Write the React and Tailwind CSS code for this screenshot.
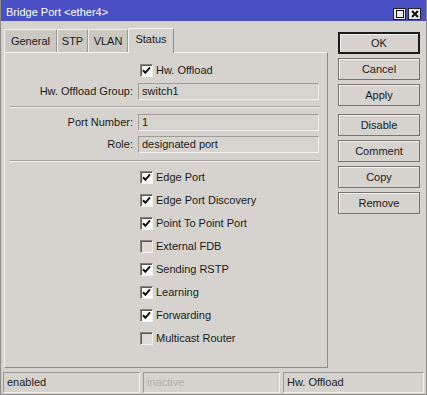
import React from 'react';

function Check({ checked }) {
  return (
    <span
      className={`w-[13px] h-[13px] shrink-0 border border-[#85827d] border-b-[#f4f2ef] border-r-[#f4f2ef] shadow-[inset_1px_1px_0_#5e5c58] flex items-center justify-center ${
        checked ? 'bg-white' : 'bg-[#dedbd6]'
      }`}
    >
      {checked && (
        <svg width="9" height="9" viewBox="0 0 9 9">
          <path d="M1 4.2 L3.4 6.8 L8 1.4" stroke="#111" strokeWidth="2" fill="none" />
        </svg>
      )}
    </span>
  );
}

function CheckRow({ label, checked }) {
  return (
    <div className="h-[13px] flex items-center pl-[135px]">
      <Check checked={checked} />
      <span className="ml-[3px] leading-none">{label}</span>
    </div>
  );
}

function Field({ label, value }) {
  return (
    <div className="flex items-center h-[17px]">
      <span className="w-[129px] text-right pr-[1px]">{label}</span>
      <div className="ml-[4px] w-[181px] h-[17px] border border-[#9f9c97] border-b-[#f2f0ec] border-r-[#f2f0ec] bg-[#d7d4cf] pl-[3px] flex items-center">
        {value}
      </div>
    </div>
  );
}

function Separator() {
  return (
    <div className="ml-[5px] w-[310px] border-t border-[#a3a09b] border-b border-b-[#f4f2ee]"></div>
  );
}

function Button({ label, primary }) {
  return (
    <div
      className={`h-[22px] flex items-center justify-center bg-[#d6d3ce] shadow-[inset_1px_1px_0_#f5f3f0] ${
        primary ? 'border-2 border-[#1b1b1b]' : 'border border-[#77746f]'
      }`}
    >
      {label}
    </div>
  );
}

const checks = [
  ['Edge Port', true],
  ['Edge Port Discovery', true],
  ['Point To Point Port', true],
  ['External FDB', false],
  ['Sending RSTP', true],
  ['Learning', true],
  ['Forwarding', true],
  ['Multicast Router', false],
];

const tabs = [
  ['General', 'w-[53px]'],
  ['STP', 'w-[31px]'],
  ['VLAN', 'w-[40px]'],
];

export default function App() {
  return (
    <div className="w-[427px] h-[395px] flex flex-col bg-[#d6d3ce] text-[11px] text-[#1a1a1a] font-['Liberation_Sans',Arial,sans-serif] border-l border-r border-b border-[#8e8b86] overflow-hidden">
      {/* title bar */}
      <div className="h-[21px] shrink-0 bg-[#4b4fc4] flex items-end justify-between pl-[5px] pr-[5px] pb-[1px] text-white">
        <span className="leading-[13px] pb-[1px]">Bridge Port &lt;ether4&gt;</span>
        <div className="flex gap-[2px]">
          <span className="w-[13px] h-[12px] bg-[#ecebe8] border border-[#222] flex items-center justify-center">
            <span className="w-[8px] h-[8px] border border-[#111]"></span>
          </span>
          <span className="w-[13px] h-[12px] bg-[#ecebe8] border border-[#222] flex items-center justify-center">
            <svg width="8" height="8" viewBox="0 0 8 8">
              <path d="M1 1 L7 7 M7 1 L1 7" stroke="#111" strokeWidth="2" />
            </svg>
          </span>
        </div>
      </div>

      <div className="flex flex-1 min-h-0">
        {/* left: tabs + panel */}
        <div className="ml-[3px] w-[324px] flex flex-col pt-[6px]">
          <div className="h-[25px] flex items-end">
            {tabs.map(([t, w]) => (
              <div
                key={t}
                className={`${w} h-[23px] flex items-center justify-center bg-[#cbc8c2] border-t border-l border-[#f1efeb] border-r border-r-[#9c9994]`}
              >
                {t}
              </div>
            ))}
            <div className="w-[46px] h-[25px] pb-[3px] flex items-center justify-center bg-[#d6d3ce] border-t border-l border-[#f6f4f1] border-r border-r-[#8f8c87] -mb-px relative z-10">
              Status
            </div>
          </div>
          <div className="flex-1 border border-[#f4f2ee] border-r-[#8f8c87] border-b-[#8f8c87] pt-[11px]">
            <CheckRow label="Hw. Offload" checked />
            <div className="mt-[6px]">
              <Field label="Hw. Offload Group:" value="switch1" />
            </div>
            <div className="mt-[6px]">
              <Separator />
            </div>
            <div className="mt-[6px]">
              <Field label="Port Number:" value="1" />
            </div>
            <div className="mt-[5px]">
              <Field label="Role:" value="designated port" />
            </div>
            <div className="mt-[7px]">
              <Separator />
            </div>
            <div className="mt-[9px] flex flex-col gap-[10px]">
              {checks.map(([l, c]) => (
                <CheckRow key={l} label={l} checked={c} />
              ))}
            </div>
          </div>
        </div>

        {/* right: buttons */}
        <div className="ml-[10px] w-[82px] pt-[11px] flex flex-col">
          <div className="flex flex-col gap-[4px]">
            <Button label="OK" primary />
            <Button label="Cancel" />
            <Button label="Apply" />
          </div>
          <div className="mt-[8px] flex flex-col gap-[4px]">
            <Button label="Disable" />
            <Button label="Comment" />
            <Button label="Copy" />
            <Button label="Remove" />
          </div>
        </div>
      </div>

      {/* status bar */}
      <div className="h-[21px] shrink-0 mt-[4px] mb-[1px] px-[2px] flex gap-[3px]">
        <div className="w-[137px] border border-[#9c9994] border-b-[#f3f1ed] border-r-[#f3f1ed] pl-[3px] flex items-center">
          enabled
        </div>
        <div className="w-[137px] border border-[#9c9994] border-b-[#f3f1ed] border-r-[#f3f1ed] pl-[3px] flex items-center text-[#b3afa9]">
          inactive
        </div>
        <div className="flex-1 border border-[#9c9994] border-b-[#f3f1ed] border-r-[#f3f1ed] pl-[3px] flex items-center">
          Hw. Offload
        </div>
      </div>
    </div>
  );
}
